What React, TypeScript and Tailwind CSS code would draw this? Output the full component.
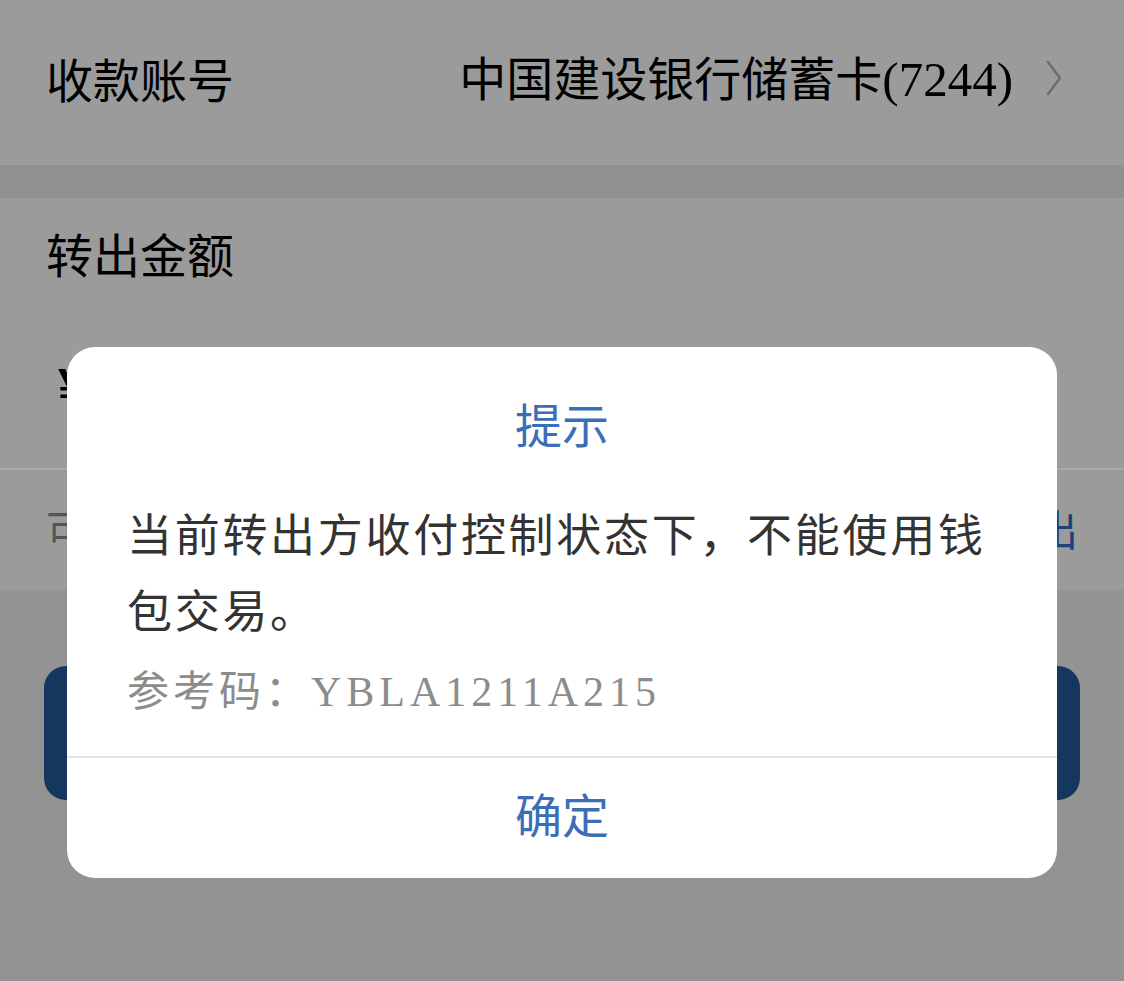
import React from "react";

const cjk = "font-['Noto_Sans_CJK_SC',sans-serif]";

const Chevron = () => (
  <svg width="16" height="36" viewBox="0 0 16 36" fill="none">
    <path d="M2 2 L14 18 L2 34" stroke="#6c6c6c" strokeWidth="2.5" strokeLinecap="round" strokeLinejoin="round" />
  </svg>
);

const App = () => {
  return (
    <div className={`relative w-[1124px] h-[981px] overflow-hidden bg-[#939393] ${cjk}`}>
      {/* page under the mask */}
      <div className="flex h-[165px] items-center justify-between bg-[#9b9b9b] pb-[10px] pl-[46px] pr-[62px]">
        <span className="text-[47px] leading-none text-black">收款账号</span>
        <div className="flex items-center gap-[33px]">
          <span className="text-[47px] leading-none text-black">
            中国建设银行储蓄卡<span className="font-['Liberation_Serif',serif] text-[49px]">(7244)</span>
          </span>
          <Chevron />
        </div>
      </div>
      <div className="h-[33px] bg-[#909090]" />
      <div className="bg-[#9b9b9b]">
        <div className="flex h-[108px] items-center pl-[46px]">
          <span className="text-[47px] leading-none text-black">转出金额</span>
        </div>
        <div className="flex h-[162px] items-center pl-[58px]">
          <span className="font-['Liberation_Sans',sans-serif] text-[50px] font-bold leading-none text-black">¥</span>
        </div>
        <div className="h-[2px] bg-[#a8a8a8]" />
        <div className="flex h-[120px] items-center justify-between px-[46px] pb-[4px]">
          <span className="text-[42px] leading-none text-[#555555]">可转出余额0.00元</span>
          <span className="text-[42px] leading-none text-[#1c4378]">全部转出</span>
        </div>
      </div>
      <div className="px-[44px] pt-[76px]">
        <div className="flex h-[134px] items-center justify-center rounded-[22px] bg-[#15375f] text-[46px] text-[#9aa5b3]">
          确认转出
        </div>
      </div>

      {/* dialog */}
      <div className="absolute left-[67px] top-[347px] flex h-[531px] w-[990px] flex-col rounded-[28px] bg-white">
        <div className="flex flex-col px-[60px] pt-[46px] pb-[34px]">
          <div className="text-center text-[47px] leading-[60px] text-[#3a6eb7]">提示</div>
          <p className="mt-[42px] text-[45px] leading-[76px] tracking-[2.7px] text-[#333333]">
            当前转出方收付控制状态下，不能使用钱包交易。
          </p>
          <p className="mt-[11px] text-[42px] leading-[60px] tracking-[4px] text-[#8c8c8c]">
            参考码：<span className="font-['Liberation_Serif','Noto_Sans_CJK_SC',serif] tracking-[5px]">YBLA1211A215</span>
          </p>
        </div>
        <div className="h-[2px] bg-[#e2e2e2]" />
        <div className="flex flex-1 items-center justify-center pb-[10px] text-[47px] text-[#3a6eb7]">确定</div>
      </div>
    </div>
  );
};

export default App;
